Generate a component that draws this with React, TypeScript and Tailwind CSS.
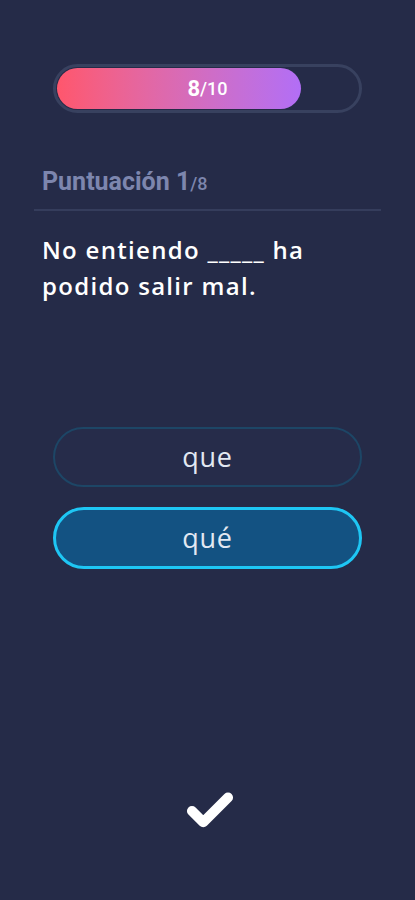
import { Check } from 'lucide-react'

const options = [
  { label: 'que', selected: false },
  { label: 'qué', selected: true },
]

export default function App() {
  return (
    <div className="w-[415px] h-[900px] bg-[#252b48] flex flex-col font-['Roboto',sans-serif]">
      {/* progreso */}
      <div className="pt-[64px] flex justify-center">
        <div className="relative w-[309px] h-[49px] rounded-full border-[3px] border-[#38415f] p-[1px]">
          <div className="h-full w-[244px] rounded-full bg-gradient-to-r from-[#ff566c] to-[#b26ef6]" />
          <div className="absolute inset-0 flex items-center justify-center text-white font-bold">
            <span className="text-[22px] leading-none">8</span>
            <span className="text-[18px] leading-none font-medium">/10</span>
          </div>
        </div>
      </div>

      {/* puntuación */}
      <div className="px-[34px] mt-[56px]">
        <div className="px-[8px] pb-[15px] text-[#7d86ae] font-bold flex items-baseline">
          <span className="text-[25px] leading-none">Puntuación 1</span>
          <span className="text-[18px] leading-none font-medium">/8</span>
        </div>
        <div className="h-[2px] bg-[#353d5c]" />
        <p className="px-[8px] pt-[21px] text-white text-[24px] leading-[36px] font-semibold font-['Open_Sans',sans-serif] tracking-[1.3px]">
          No entiendo _____ ha
          <br />
          podido salir mal.
        </p>
      </div>

      {/* opciones */}
      <div className="mt-[123px] flex flex-col items-center gap-[20px]">
        {options.map((o) => (
          <div
            key={o.label}
            className={
              o.selected
                ? 'w-[309px] h-[62px] rounded-full border-[3px] border-[#1ec6f4] bg-[#135282] flex items-center justify-center'
                : 'w-[309px] h-[60px] rounded-full border-[2px] border-[#1d4666] bg-[#262c4a] flex items-center justify-center'
            }
          >
            <span className="text-[27px] tracking-[0.8px] text-[#e2e8f2] font-['Open_Sans',sans-serif]">{o.label}</span>
          </div>
        ))}
      </div>

      <div className="mt-auto mb-[62px] flex justify-center">
        <Check size={54} strokeWidth={4.5} className="text-white ml-[4px]" />
      </div>
    </div>
  )
}
